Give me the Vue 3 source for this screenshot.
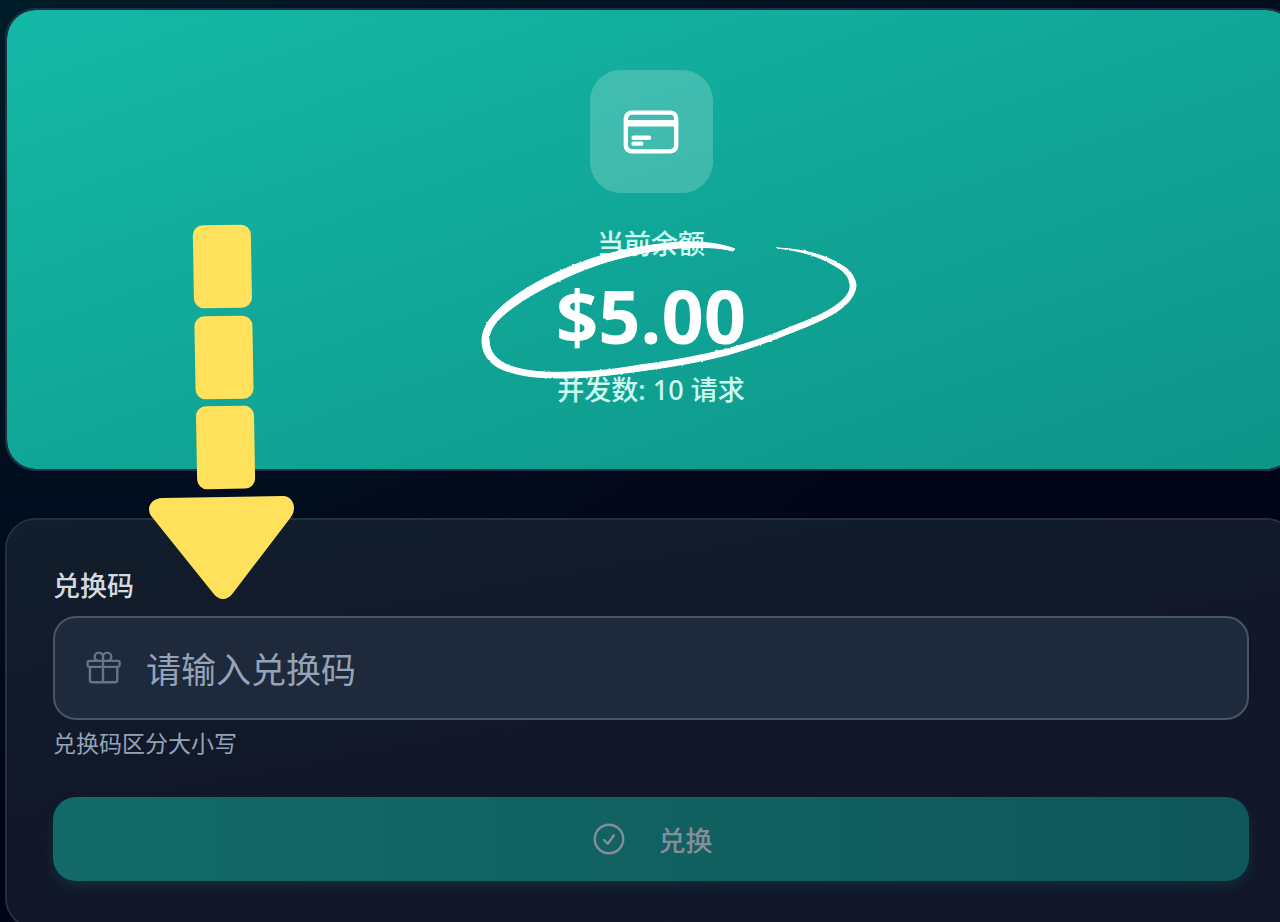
<script setup>
import { ref } from 'vue'

const code = ref('')
const balance = ref('$5.00')
const concurrency = ref(10)
</script>

<template>
  <main class="page">
    <section class="card balance">
      <div class="badge">
        <svg class="badge-icon" viewBox="0 0 24 24" fill="none" stroke="currentColor" stroke-width="1.7" stroke-linecap="round" stroke-linejoin="round" aria-hidden="true">
          <path d="M2.25 8.25h19.5M2.25 9h19.5m-16.5 5.25h6m-6 2.25h3m-3.75 3h15a2.25 2.25 0 002.25-2.25V6.75A2.25 2.25 0 0019.5 4.5h-15a2.25 2.25 0 00-2.25 2.25v10.5A2.25 2.25 0 004.5 19.5z" />
        </svg>
      </div>
      <p class="caption">当前余额</p>
      <p class="amount">{{ balance }}</p>
      <p class="caption">并发数: {{ concurrency }} 请求</p>
      <svg class="ring" viewBox="480 238 380 144" aria-hidden="true">
        <defs>
          <filter id="rough" x="-5%" y="-5%" width="110%" height="110%">
            <feTurbulence type="fractalNoise" baseFrequency="0.25" numOctaves="2" seed="4" />
            <feDisplacementMap in="SourceGraphic" scale="2" xChannelSelector="R" yChannelSelector="G" />
          </filter>
        </defs>
        <path
          filter="url(#rough)"
          fill="#fff"
          stroke="#fff"
          stroke-width="1"
          stroke-linejoin="round"
          d="M735 249 C723 244 702 241 680 242 C652 244 625 249 600 256 C573 264 547 276 527 288 C510 299 481 318 482 342 C483 361 498 369 510 372 C528 378 548 378 570 378 C597 377 619 374 640 371 C671 367 699 362 727 355 C752 348 773 340 793 332 C811 325 833 316 843 307 C851 301 856 292 856 285 C855 277 850 270 843 266 C826 255 804 249 777 248 C803 251 822 257 840 269 C847 274 851 281 850 288 C849 294 844 299 838 304 C826 313 809 320 793 326 C772 335 750 343 727 349 C699 356 671 361 640 365 C617 369 594 372 570 372 C549 373 528 372 510 366 C498 361 489 353 489 340 C489 324 507 311 527 298 C545 287 571 274 600 264 C626 256 653 250 680 248 C701 247 718 247 733 251 Z"
        />
      </svg>
    </section>

    <form class="card redeem" @submit.prevent>
      <label class="label" for="code">兑换码</label>
      <div class="field">
        <svg class="icon field-icon" viewBox="0 0 24 24" fill="none" stroke="currentColor" stroke-width="1.5" stroke-linecap="round" stroke-linejoin="round" aria-hidden="true">
          <path d="M21 11.25v8.25a1.5 1.5 0 01-1.5 1.5H5.25a1.5 1.5 0 01-1.5-1.5v-8.25M12 4.875A2.625 2.625 0 109.375 7.5H12m0-2.625V7.5m0-2.625A2.625 2.625 0 1114.625 7.5H12m0 0V21m-8.625-9.75h18c.621 0 1.125-.504 1.125-1.125v-1.5c0-.621-.504-1.125-1.125-1.125h-18c-.621 0-1.125.504-1.125 1.125v1.5c0 .621.504 1.125 1.125 1.125z" />
        </svg>
        <input id="code" v-model="code" class="input" type="text" placeholder="请输入兑换码" aria-describedby="hint" autocomplete="off" />
      </div>
      <p id="hint" class="hint">兑换码区分大小写</p>
      <button class="submit" type="submit" :disabled="!code">
        <svg class="icon" viewBox="0 0 24 24" fill="none" stroke="currentColor" stroke-width="1.5" stroke-linecap="round" stroke-linejoin="round" aria-hidden="true">
          <path d="M9 12.75L11.25 15 15 9.75M21 12a9 9 0 11-18 0 9 9 0 0118 0z" />
        </svg>
        <span>兑换</span>
      </button>
    </form>

    <svg class="arrow" viewBox="148 224 148 376" fill="#ffe15c" aria-hidden="true">
      <g transform="rotate(-1 222 358)">
        <rect x="195" y="225" width="58" height="83" rx="10" />
        <rect x="195" y="316" width="58" height="83" rx="10" />
        <rect x="195" y="406" width="58" height="83" rx="10" />
      </g>
      <path d="M162 498 L283 496 C290 496 294 502 294 508 C294 511 293 514 291 517 L233 593 C227 601 219 601 213 593 L152 517 C150 515 149 512 149 509 C149 503 155 498 162 498 Z" />
    </svg>
  </main>
</template>

<style>
body {
  margin: 0;
  background: #020617;
}
</style>

<style scoped>
.page {
  position: relative;
  box-sizing: border-box;
  display: flex;
  flex-direction: column;
  gap: 47px;
  height: 100vh;
  padding: 8px 0 0 5px;
  overflow: hidden;
  font-family: "Noto Sans", "Noto Sans CJK SC", sans-serif;
  background:
    radial-gradient(ellipse 1100px 800px at 0 0, #001c29, rgba(0, 28, 41, 0)),
    radial-gradient(ellipse 900px 300px at 70% 0, rgba(0, 20, 34, 0.8), rgba(0, 20, 34, 0)),
    #020518;
}

p {
  margin: 0;
}

.card {
  position: relative;
  box-sizing: border-box;
  flex: none;
  margin-right: -17px;
  border: 2px solid #223043;
  border-radius: 31px;
}

.balance {
  display: flex;
  flex-direction: column;
  align-items: center;
  gap: 13px;
  padding: 60px 60px 59px;
  background: linear-gradient(to bottom right, #14b8a6, #0d9488) padding-box;
}

.badge {
  display: flex;
  align-items: center;
  justify-content: center;
  width: 123px;
  height: 123px;
  margin-bottom: 18px;
  border-radius: 31px;
  background: rgba(255, 255, 255, 0.2);
  color: #fff;
}

.badge-icon {
  width: 62px;
  height: 62px;
}

.caption {
  font-size: 27px;
  font-weight: 500;
  line-height: 40px;
  color: #ccfbf1;
}

.amount {
  margin-bottom: 3px;
  font-size: 74px;
  font-weight: 700;
  line-height: 77px;
  color: #fff;
}

.ring {
  position: absolute;
  top: 228px;
  left: calc(50% - 171px);
  width: 380px;
  height: 144px;
  pointer-events: none;
}

.redeem {
  display: flex;
  flex-direction: column;
  padding: 46px;
  background: linear-gradient(170deg, #111e2c, #111829 45%, #121629) padding-box;
}

.label {
  margin-bottom: 10px;
  font-size: 27px;
  font-weight: 500;
  line-height: 40px;
  color: #d5d9df;
}

.field {
  position: relative;
}

.icon {
  flex: none;
  width: 38px;
  height: 38px;
}

.field-icon {
  position: absolute;
  top: 33px;
  left: 31px;
  color: #64748b;
  pointer-events: none;
}

.input {
  display: block;
  box-sizing: border-box;
  width: 100%;
  height: 104px;
  padding: 2px 30px 0 91px;
  border: 2px solid #475569;
  border-radius: 23px;
  outline: none;
  background: #1e293b;
  color: #f1f5f9;
  font-family: inherit;
  font-size: 35px;
}

.input::placeholder {
  color: #94a3b8;
  opacity: 1;
}

.hint {
  margin-top: 8px;
  font-size: 23px;
  line-height: 31px;
  color: #94a3b8;
}

.submit {
  display: flex;
  align-items: center;
  justify-content: center;
  gap: 31px;
  height: 84px;
  margin-top: 38px;
  padding: 0;
  border: 0;
  border-radius: 23px;
  background: linear-gradient(90deg, #136b69, #0f575a);
  box-shadow: 0 6px 12px rgba(20, 184, 166, 0.13);
  color: #888c99;
  font-family: inherit;
  font-size: 27px;
  font-weight: 500;
}

.arrow {
  position: absolute;
  top: 224px;
  left: 148px;
  width: 148px;
  height: 376px;
  pointer-events: none;
}
</style>
